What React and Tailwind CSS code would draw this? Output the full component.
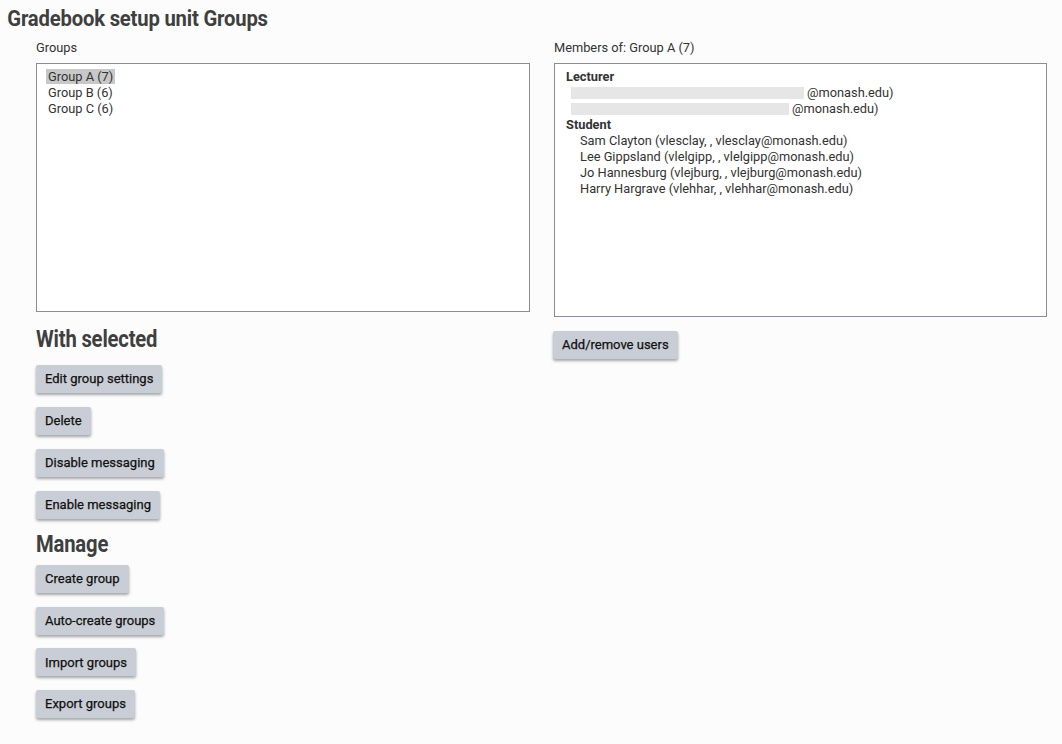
const groups = [
  { name: "Group A (7)", selected: true },
  { name: "Group B (6)" },
  { name: "Group C (6)" },
];

const students = [
  "Sam Clayton (vlesclay, , vlesclay@monash.edu)",
  "Lee Gippsland (vlelgipp, , vlelgipp@monash.edu)",
  "Jo Hannesburg (vlejburg, , vlejburg@monash.edu)",
  "Harry Hargrave (vlehhar, , vlehhar@monash.edu)",
];

function Btn({ children }) {
  return (
    <button
      type="button"
      className="h-[28px] rounded-[2px] bg-[#c9cdd5] px-[9px] text-[13px] font-normal text-[#111] [-webkit-text-stroke:0.25px_#111] shadow-[0_2px_3px_rgba(0,0,0,0.35)]"
    >
      {children}
    </button>
  );
}

function Heading({ children, className = "" }) {
  return (
    <h2
      className={
        "origin-left scale-x-[0.88] text-[23px] font-bold leading-[24px] tracking-[-0.2px] text-[#3f3f3f] " +
        className
      }
    >
      {children}
    </h2>
  );
}

export default function App() {
  return (
    <main
      className="min-h-[744px] w-full bg-[#fcfcfd] text-[12.8px] text-[#333]"
      style={{ fontFamily: "Roboto, 'Liberation Sans', sans-serif" }}
    >
      <h1 className="origin-left scale-x-[0.92] px-2 pt-[6px] text-[22px] font-bold leading-[26px] tracking-[-0.2px] text-[#3f3f3f]">
        Gradebook setup unit Groups
      </h1>

      <div className="mt-[8px] flex gap-[24px] pl-[36px]">
        <section className="w-[494px]">
          <p className="leading-[16px]">Groups</p>
          <div className="mt-[7px] h-[249px] border border-[#8a8d96] bg-white px-[9px] pt-[5px]">
            {groups.map((g) => (
              <div key={g.name} className="leading-[16px]">
                <span className={g.selected ? "bg-[#c8c8c8] px-[2px]" : "px-[2px]"}>{g.name}</span>
              </div>
            ))}
          </div>

          <Heading className="mt-[16px]">With selected</Heading>
          <div className="mt-[13px] flex flex-col items-start gap-[14px]">
            <Btn>Edit group settings</Btn>
            <Btn>Delete</Btn>
            <Btn>Disable messaging</Btn>
            <Btn>Enable messaging</Btn>
          </div>

          <Heading className="mt-[14px]">Manage</Heading>
          <div className="mt-[8px] flex flex-col items-start gap-[13.7px]">
            <Btn>Create group</Btn>
            <Btn>Auto-create groups</Btn>
            <Btn>Import groups</Btn>
            <Btn>Export groups</Btn>
          </div>
        </section>

        <section className="w-[493px]">
          <p className="leading-[16px]">Members of: Group A (7)</p>
          <div className="mt-[7px] h-[254px] border border-[#8a8d96] bg-white pl-[11px] pt-[5px] leading-[16px]">
            <p className="font-bold">Lecturer</p>
            <div className="flex items-center pl-[5px]">
              <span className="inline-block h-[12px] w-[233px] bg-[#e6e6e6]" />
              <span className="ml-[3px]">@monash.edu)</span>
            </div>
            <div className="flex items-center pl-[5px]">
              <span className="inline-block h-[12px] w-[218px] bg-[#e6e6e6]" />
              <span className="ml-[3px]">@monash.edu)</span>
            </div>
            <p className="font-bold">Student</p>
            {students.map((s) => (
              <p key={s} className="pl-[14px]">
                {s}
              </p>
            ))}
          </div>
          <div className="mt-[14px] -ml-[1px]">
            <Btn>Add/remove users</Btn>
          </div>
        </section>
      </div>
    </main>
  );
}
